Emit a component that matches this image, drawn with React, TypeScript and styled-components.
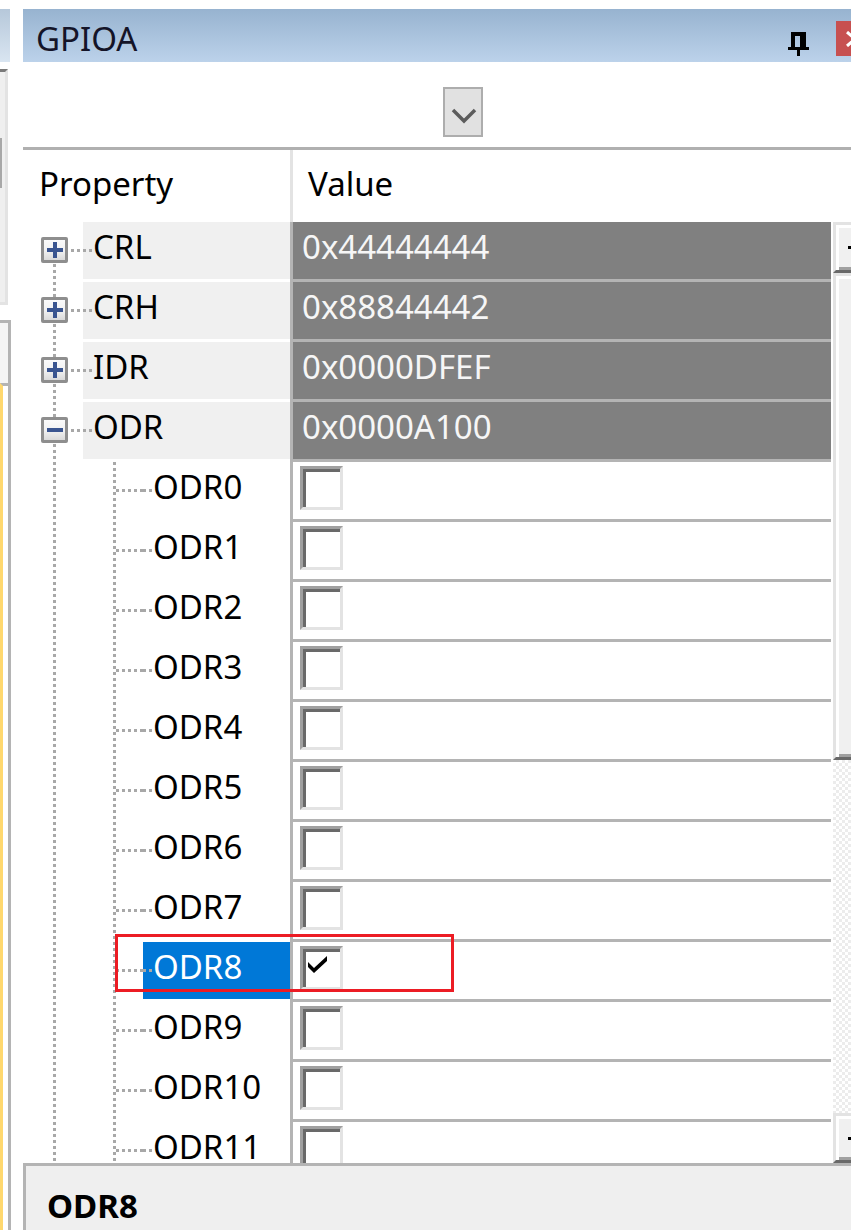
import styled, { createGlobalStyle } from "styled-components";

const GlobalStyle = createGlobalStyle`
  html, body {
    margin: 0;
    padding: 0;
    background: #fff;
  }
  body {
    font-family: "Noto Sans", "Open Sans", sans-serif;
    font-size: 33px;
    line-height: 1;
    color: #000;
  }
`;

const DOT = "#a8a8a8";
const vDots = `repeating-linear-gradient(to bottom, ${DOT} 0 3px, transparent 3px 6px)`;
const hDots = `repeating-linear-gradient(to right, ${DOT} 0 3px, transparent 3px 6px)`;

const Screen = styled.div`
  position: relative;
  width: 851px;
  height: 1230px;
  overflow: hidden;
  display: flex;
  background: #fff;
`;

// bits of the neighbouring docked windows on the left
const LeftStrip = styled.div`
  width: 23px;
  flex-shrink: 0;
  display: flex;
  flex-direction: column;
`;

const StripCaption = styled.div`
  margin-top: 9px;
  width: 10px;
  height: 53px;
  background: linear-gradient(#b6c8da, #d9e5f1);
`;

const StripPanel = styled.div`
  margin-top: 7px;
  width: 5px;
  height: 230px;
  border-top: 3px solid #7a7a7a;
  border-right: 3px solid #e3e3e3;
  border-bottom: 3px solid #e3e3e3;
  background: #efefef;
  display: flex;
  flex-direction: column;
`;

const StripThumb = styled.div`
  margin-top: 66px;
  width: 2px;
  height: 50px;
  background: #a8a8a8;
`;

const StripBox = styled.div`
  margin-top: 15px;
  width: 8px;
  height: 60px;
  border-top: 3px solid #b4b4b4;
  border-right: 3px solid #b4b4b4;
  background: #f5f5f5;
`;

const StripDoc = styled.div`
  flex: 1;
  width: 5px;
  border-top: 3px solid #b4b4b4;
  border-left: 3px solid #ffd86e;
  border-right: 3px solid #b4b4b4;
  background: #fff;
`;

const Panel = styled.div`
  flex: 1;
  min-width: 0;
  display: flex;
  flex-direction: column;
  padding-top: 9px;
`;

const TitleBar = styled.div`
  flex-shrink: 0;
  height: 53px;
  margin-right: -23px;
  display: flex;
  align-items: flex-start;
  background: linear-gradient(#97b3d0, #bcd2ea);
  overflow: hidden;
`;

const TitleText = styled.div`
  flex: 1;
  min-width: 0;
  align-self: stretch;
  display: flex;
  align-items: center;
  padding: 5px 0 0 13px;
  color: #141428;
`;

const PinButton = styled.div`
  flex-shrink: 0;
  margin: 18px 27px 0 0;
  width: 21px;
  height: 24px;
`;

const CloseButton = styled.div`
  flex-shrink: 0;
  margin-top: 12px;
  width: 38px;
  height: 35px;
  background: #c75050;
  display: flex;
  align-items: center;
  justify-content: center;
`;

const Toolbar = styled.div`
  flex-shrink: 0;
  height: 88px;
  box-sizing: border-box;
  border-bottom: 3px solid #b0b0b0;
  padding: 25px 0 0 420px;
  display: flex;
  align-items: flex-start;
`;

const DropButton = styled.div`
  width: 40px;
  height: 50px;
  box-sizing: border-box;
  border: 2px solid #adadad;
  background: #e1e1e1;
`;

const HeaderRow = styled.div`
  flex-shrink: 0;
  height: 72px;
  display: grid;
  grid-template-columns: 267px 3px 1fr;
`;

const HeaderCell = styled.div<{ $pad: number }>`
  display: flex;
  align-items: center;
  padding: 0 0 5px ${(p) => p.$pad}px;
`;

const HeaderDivider = styled.div`
  background: #e3e3e3;
`;

const Body = styled.div`
  flex-shrink: 0;
  height: 941px;
  display: flex;
  overflow: hidden;
`;

const RowList = styled.div`
  flex: 1;
  min-width: 0;
  display: flex;
  flex-direction: column;
`;

const Row = styled.div`
  flex-shrink: 0;
  height: 60px;
  display: grid;
  grid-template-columns: 267px 3px 1fr;
`;

const LabelCell = styled.div`
  display: flex;
  min-width: 0;
`;

const Gutter = styled.div<{ $level: 0 | 1; $first?: boolean }>`
  flex-shrink: 0;
  width: ${(p) => (p.$level === 0 ? 60 : 120)}px;
  height: 60px;
  box-sizing: border-box;
  padding: 15px 0 0 18px;
  background: ${(p) =>
    p.$level === 0
      ? `${vDots} 30px ${p.$first ? "30px" : "0"} / 3px ${p.$first ? "30px" : "100%"} no-repeat, ${hDots} 48px 27px / 12px 3px no-repeat`
      : `${vDots} 30px 0 / 3px 100% no-repeat, ${vDots} 90px 0 / 3px 100% no-repeat, ${hDots} 93px 27px / 27px 3px no-repeat`};
`;

const Expander = styled.div`
  width: 27px;
  height: 26px;
  box-sizing: border-box;
  border: 3px solid #8e8e8e;
  border-radius: 2px;
  background: linear-gradient(#fbfbfb, #f2f2f2 50%, #dadada);
  display: flex;
  align-items: center;
  justify-content: center;
`;

type Tone = "group" | "plain" | "selected";

const toneBg: Record<Tone, string> = {
  group: "#f0f0f0",
  plain: "#fff",
  selected: "#0078d7",
};

const LabelBox = styled.div<{ $tone: Tone }>`
  flex: 1;
  min-width: 0;
  height: 57px;
  box-sizing: border-box;
  display: flex;
  align-items: center;
  padding: 0 0 8px 10px;
  background: ${hDots} 0 27px / 9px 3px no-repeat, ${(p) => toneBg[p.$tone]};
  color: ${(p) => (p.$tone === "selected" ? "#fff" : "#000")};
`;

const Divider = styled.div`
  background: #b4b4b4;
`;

const ValueCell = styled.div<{ $group: boolean }>`
  min-width: 0;
  height: 60px;
  box-sizing: border-box;
  border-bottom: 3px solid #b4b4b4;
  display: flex;
  align-items: ${(p) => (p.$group ? "center" : "flex-start")};
  padding: ${(p) => (p.$group ? "0 0 8px 9px" : "4px 0 0 7px")};
  background: ${(p) => (p.$group ? "#808080" : "#fff")};
  color: #f6f6f6;
`;

const CheckBox = styled.div`
  width: 43px;
  height: 44px;
  box-sizing: border-box;
  border-top: 3px solid #a0a0a0;
  border-left: 3px solid #a0a0a0;
  border-right: 3px solid #e3e3e3;
  border-bottom: 3px solid #e3e3e3;
  box-shadow: inset 3px 3px 0 #696969;
  background: #fff;
`;

const ScrollBar = styled.div`
  width: 18px;
  padding-left: 2px;
  flex-shrink: 0;
  display: flex;
  flex-direction: column;
  background: #fff;
`;

const ScrollPart = styled.div<{ $h: number }>`
  height: ${(p) => p.$h}px;
  flex-shrink: 0;
  box-sizing: border-box;
  border-top: 3px solid #e3e3e3;
  border-left: 3px solid #e3e3e3;
  border-bottom: 3px solid #696969;
  box-shadow: inset 3px 3px 0 #fff, inset 0 -3px 0 #a0a0a0;
  background: #f0f0f0;
  display: flex;
  align-items: center;
  justify-content: flex-end;
`;

const ArrowTip = styled.div`
  width: 3px;
  height: 3px;
  background: #000;
`;

const ScrollTrack = styled.div`
  flex: 1;
  background: repeating-conic-gradient(#ececec 0 25%, #fff 0 50%) 0 0 / 6px 6px;
`;

const Description = styled.div`
  flex: 1;
  border-top: 3px solid #b4b4b4;
  border-left: 3px solid #b4b4b4;
  background: #efefef;
  padding: 23px 0 0 21px;
  font-weight: 700;
`;

const Annotation = styled.div`
  position: absolute;
  left: 115px;
  top: 934px;
  width: 339px;
  height: 58px;
  box-sizing: border-box;
  border: 3px solid #ec1c24;
  pointer-events: none;
`;

type RowData = {
  name: string;
  level: 0 | 1;
  value?: string;
  expanded?: boolean;
  checked?: boolean;
};

const rows: RowData[] = [
  { name: "CRL", level: 0, value: "0x44444444" },
  { name: "CRH", level: 0, value: "0x88844442" },
  { name: "IDR", level: 0, value: "0x0000DFEF" },
  { name: "ODR", level: 0, value: "0x0000A100", expanded: true },
  ...Array.from({ length: 12 }, (_, i) => ({
    name: `ODR${i}`,
    level: 1 as const,
    checked: i === 8,
  })),
];

const selectedName = "ODR8";

const PinIcon = () => (
  <svg width="21" height="24" viewBox="0 0 21 24">
    <rect x="3" y="0" width="4" height="15" fill="#000" />
    <rect x="12" y="0" width="6" height="15" fill="#000" />
    <rect x="3" y="0" width="15" height="4" fill="#000" />
    <rect x="0" y="15" width="21" height="3" fill="#000" />
    <rect x="9" y="18" width="3" height="6" fill="#000" />
  </svg>
);

const CloseIcon = () => (
  <svg width="20" height="16" viewBox="0 0 20 16">
    <path d="M2 1 L18 15 M18 1 L2 15" stroke="#fff" strokeWidth="3" />
  </svg>
);

const Chevron = () => (
  <svg width="36" height="46" viewBox="0 0 36 46">
    <polyline
      points="8,21 19,32 30,21"
      fill="none"
      stroke="#5c5c5c"
      strokeWidth="3.5"
    />
  </svg>
);

const ExpandGlyph = ({ open }: { open: boolean }) => (
  <svg width="16" height="16" viewBox="0 0 16 16">
    <rect x="0" y="6" width="16" height="4" fill="#3a5590" />
    {!open && <rect x="6" y="0" width="4" height="16" fill="#3a5590" />}
  </svg>
);

const CheckMark = () => (
  <svg width="37" height="38" viewBox="0 0 37 38">
    <path d="M5 13 L11 19 L11 24 L5 18 Z M11 19 L24 7 L24 12 L11 24 Z" fill="#000" />
  </svg>
);

const PropertyRow = ({ row, first }: { row: RowData; first: boolean }) => {
  const isGroup = row.level === 0;
  const tone: Tone = isGroup
    ? "group"
    : row.name === selectedName
      ? "selected"
      : "plain";

  return (
    <Row>
      <LabelCell>
        <Gutter $level={row.level} $first={first}>
          {isGroup && (
            <Expander>
              <ExpandGlyph open={!!row.expanded} />
            </Expander>
          )}
        </Gutter>
        <LabelBox $tone={tone}>{row.name}</LabelBox>
      </LabelCell>
      <Divider />
      <ValueCell $group={isGroup}>
        {isGroup ? (
          row.value
        ) : (
          <CheckBox>{row.checked && <CheckMark />}</CheckBox>
        )}
      </ValueCell>
    </Row>
  );
};

export default function App() {
  return (
    <>
      <GlobalStyle />
      <Screen>
        <LeftStrip>
          <StripCaption />
          <StripPanel>
            <StripThumb />
          </StripPanel>
          <StripBox />
          <StripDoc />
        </LeftStrip>
        <Panel>
          <TitleBar>
            <TitleText>GPIOA</TitleText>
            <PinButton>
              <PinIcon />
            </PinButton>
            <CloseButton>
              <CloseIcon />
            </CloseButton>
          </TitleBar>
          <Toolbar>
            <DropButton>
              <Chevron />
            </DropButton>
          </Toolbar>
          <HeaderRow>
            <HeaderCell $pad={16}>Property</HeaderCell>
            <HeaderDivider />
            <HeaderCell $pad={15}>Value</HeaderCell>
          </HeaderRow>
          <Body>
            <RowList>
              {rows.map((row, i) => (
                <PropertyRow key={row.name} row={row} first={i === 0} />
              ))}
            </RowList>
            <ScrollBar>
              <ScrollPart $h={51}>
                <ArrowTip />
              </ScrollPart>
              <ScrollPart $h={487} />
              <ScrollTrack />
              <ScrollPart $h={50}>
                <ArrowTip />
              </ScrollPart>
            </ScrollBar>
          </Body>
          <Description>{selectedName}</Description>
        </Panel>
        <Annotation />
      </Screen>
    </>
  );
}
